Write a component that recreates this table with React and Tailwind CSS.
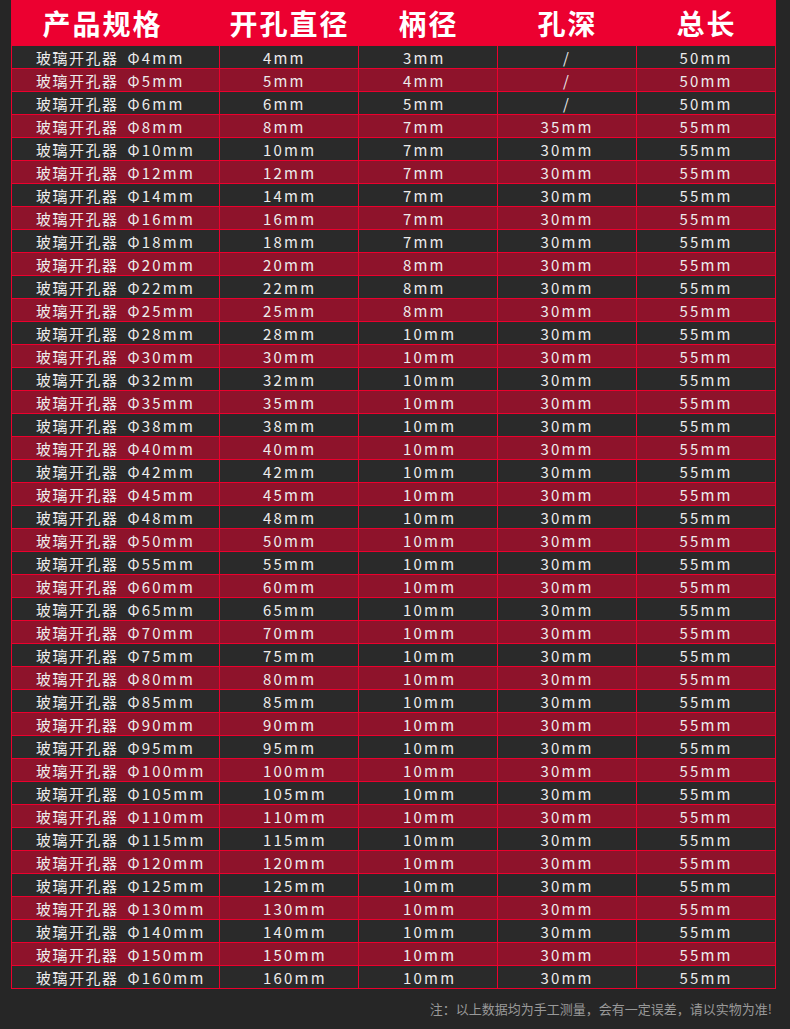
const sizes = [4, 5, 6, 8, 10, 12, 14, 16, 18, 20, 22, 25, 28, 30, 32, 35, 38, 40, 42, 45, 48, 50, 55, 60, 65, 70, 75, 80, 85, 90, 95, 100, 105, 110, 115, 120, 125, 130, 140, 150, 160];

const rows = sizes.map((d) => {
  let shank = "10mm";
  if (d === 4) shank = "3mm";
  else if (d === 5) shank = "4mm";
  else if (d === 6) shank = "5mm";
  else if (d <= 18) shank = "7mm";
  else if (d <= 25) shank = "8mm";
  return {
    size: `Φ${d}mm`,
    hole: `${d}mm`,
    shank,
    depth: d < 8 ? "/" : d === 8 ? "35mm" : "30mm",
    total: d < 8 ? "50mm" : "55mm",
  };
});

const headers = ["产品规格", "开孔直径", "柄径", "孔深", "总长"];

export default function App() {
  return (
    <div
      className="w-[790px] h-[1029px] bg-[#262626] overflow-hidden"
      style={{ fontFamily: '"Noto Sans CJK SC", "Noto Sans", sans-serif' }}
    >
      <div className="ml-[11px] w-[765px]">
        <div className="flex h-[45px] bg-[#ec0030] text-white font-bold text-[28px] tracking-[2px] leading-none">
          <div className="w-[209px] flex items-center justify-center pr-[26px]">{headers[0]}</div>
          <div className="w-[139px] flex items-center justify-center">{headers[1]}</div>
          <div className="w-[139px] flex items-center justify-center">{headers[2]}</div>
          <div className="w-[139px] flex items-center justify-center">{headers[3]}</div>
          <div className="w-[139px] flex items-center justify-center">{headers[4]}</div>
        </div>

        {rows.map((r, i) => (
          <div
            key={r.size}
            className={`flex h-[23px] border-t border-[#ec002d] text-[15px] tracking-[2.2px] text-[#ececec] leading-none ${
              i % 2 ? "bg-[#8e132b]" : "bg-[#2a2a2a]"
            } ${i === rows.length - 1 ? "h-[24px] border-b" : ""}`}
          >
            <div className="w-[209px] border-l border-r border-[#ec002d] flex items-center pl-[24px] whitespace-nowrap">
              <span className="tracking-[1.5px]">玻璃开孔器</span>
              <span className="ml-[9px]">{r.size}</span>
            </div>
            <div className="w-[139px] border-r border-[#ec002d] flex items-center pl-[43px]">{r.hole}</div>
            <div className="w-[139px] border-r border-[#ec002d] flex items-center pl-[44px]">{r.shank}</div>
            <div className="w-[139px] border-r border-[#ec002d] flex items-center justify-center">{r.depth}</div>
            <div className="w-[139px] border-r border-[#ec002d] flex items-center justify-center">{r.total}</div>
          </div>
        ))}
      </div>

      <div className="pt-[11px] pr-[18px] text-right text-[13px] leading-[17px] text-[#999999]">
        注：以上数据均为手工测量，会有一定误差，请以实物为准!
      </div>
    </div>
  );
}
